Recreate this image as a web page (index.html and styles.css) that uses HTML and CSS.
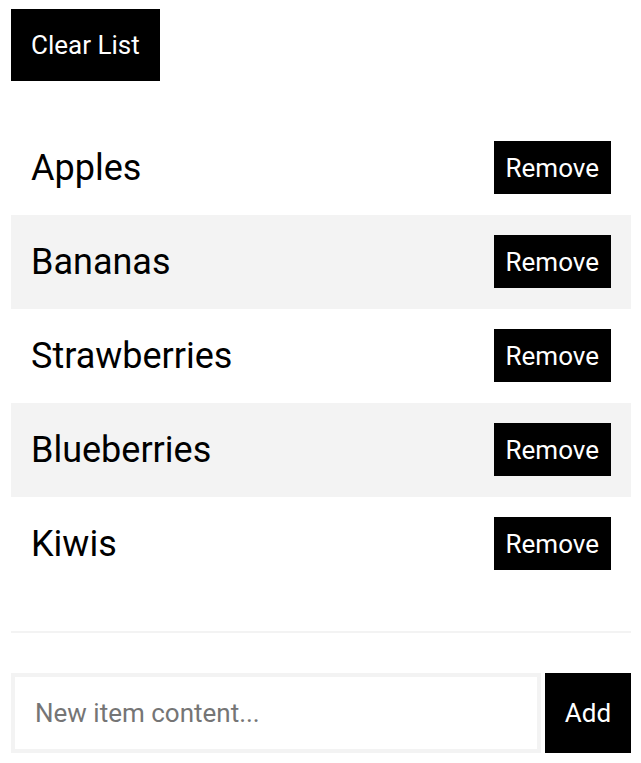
FILE: index.html
```html
<!DOCTYPE html>
<html lang="en">
<head>
<meta charset="utf-8">
<title>List</title>
<link rel="stylesheet" href="styles.css">
</head>
<body>
<div class="app">
  <div class="toolbar">
    <button class="btn btn-clear">Clear List</button>
  </div>
  <ul class="list">
    <li class="item"><span class="item-text">Apples</span><button class="btn btn-remove">Remove</button></li>
    <li class="item"><span class="item-text">Bananas</span><button class="btn btn-remove">Remove</button></li>
    <li class="item"><span class="item-text">Strawberries</span><button class="btn btn-remove">Remove</button></li>
    <li class="item"><span class="item-text">Blueberries</span><button class="btn btn-remove">Remove</button></li>
    <li class="item"><span class="item-text">Kiwis</span><button class="btn btn-remove">Remove</button></li>
  </ul>
  <hr class="divider">
  <form class="add-form">
    <input class="add-input" type="text" placeholder="New item content...">
    <button class="btn btn-add" type="button">Add</button>
  </form>
</div>
</body>
</html>
```
FILE: styles.css
```css
* { box-sizing: border-box; }
html, body { margin: 0; padding: 0; background: #fff; }
body { font-family: Roboto, "Liberation Sans", sans-serif; color: #000; }
.app { padding: 9px 10px 0 11px; }
.toolbar { display: flex; }
.btn {
  font-family: Roboto, "Liberation Sans", sans-serif;
  font-size: 26px;
  line-height: 30px;
  background: #000;
  color: #fff;
  border: 0;
  border-radius: 0;
  margin: 0;
  display: flex;
  align-items: center;
  justify-content: center;
  cursor: pointer;
}
.btn-clear { height: 72px; padding: 0 20px; }
.list { list-style: none; margin: 40px 0 0; padding: 0; }
.item {
  display: flex;
  align-items: center;
  justify-content: space-between;
  height: 94px;
  padding: 20px 20px 21px 20px;
}
.item:nth-child(even) { background: #f3f3f3; }
.item-text { font-size: 36px; line-height: 40px; }
.btn-remove { height: 53px; padding: 0 12px; }
.divider { margin: 40px 0 0; border: 0; height: 2px; background: #f3f3f3; }
.add-form { display: flex; gap: 4px; margin-top: 40px; height: 80px; }
.add-input {
  flex: 1;
  min-width: 0;
  height: 80px;
  border: 4px solid #f3f3f3;
  padding: 0 20px;
  font-family: Roboto, "Liberation Sans", sans-serif;
  font-size: 26px;
  color: #000;
  outline: none;
  margin: 0;
}
.add-input::placeholder { color: #757575; }
.btn-add { width: 86px; height: 80px; padding: 0; }
```
